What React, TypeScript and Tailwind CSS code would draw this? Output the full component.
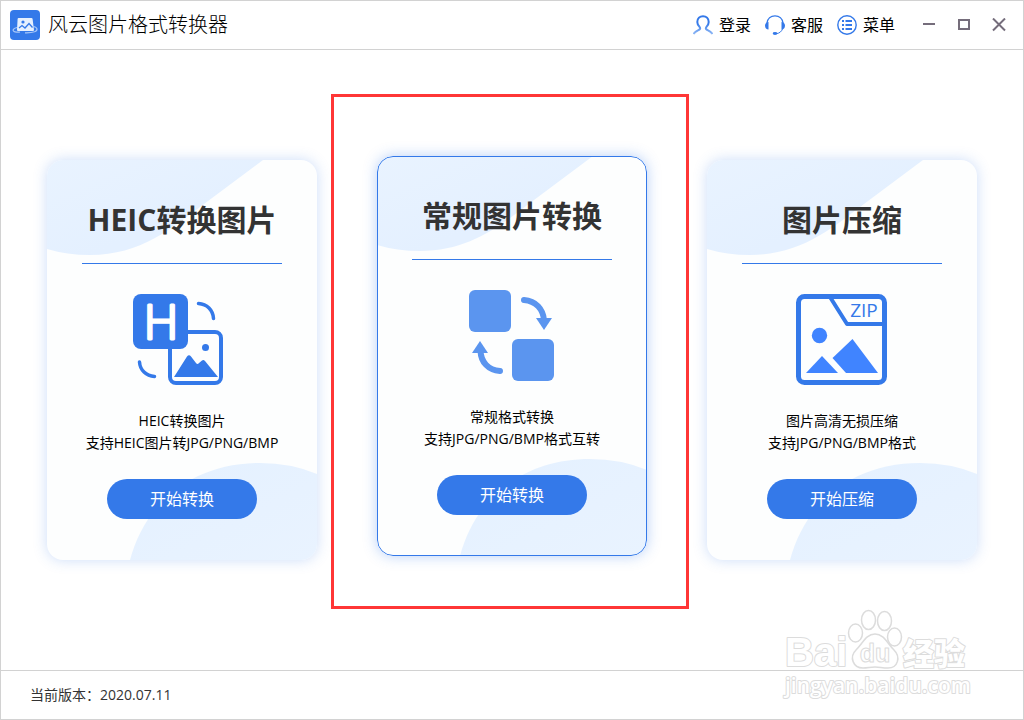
import type { ReactNode } from 'react';

type ToolCard = {
  id: string;
  title: string;
  lines: string[];
  action: string;
  icon: ReactNode;
  active?: boolean;
};

function LogoIcon() {
  return (
    <svg width="30" height="30" viewBox="0 0 30 30" aria-hidden="true">
      <rect width="30" height="30" rx="4" fill="#3479e9" />
      <path d="M7 17.5C2.5 18.5 2 21 5 21.8C7 22.3 9 22.2 10 22" fill="none" stroke="#a9c8f8" strokeWidth="1.2" />
      <path d="M23.5 16.5C28 17.5 28 20.5 24.5 21.8C21.5 22.8 18 22.9 15 22.8" fill="none" stroke="#a9c8f8" strokeWidth="1.2" />
      <path d="M8.5 8H21.5Q22.5 8 22.6 9L24 20Q24 21 23 21H8Q7 21 7 20L7.6 9Q7.7 8 8.5 8Z" fill="#e6f0fe" />
      <circle cx="13" cy="12" r="1.6" fill="#3479e9" />
      <path d="M9 18L12 15.5L15 18L19 13.5L22.5 17.5" fill="none" stroke="#3479e9" strokeWidth="1.3" />
    </svg>
  );
}

function UserIcon() {
  return (
    <svg width="20" height="20" viewBox="0 0 20 20" fill="none" aria-hidden="true">
      <defs>
        <linearGradient id="user-fade" x1="0" y1="0" x2="0" y2="1">
          <stop offset="0.4" stopColor="#3479e9" />
          <stop offset="1" stopColor="#8fb8f5" />
        </linearGradient>
      </defs>
      <path
        d="M0.5 19C2 16.5 4 15.8 6.5 14.5C7.5 14 7.3 13 6.6 12C5 10.5 4.3 9 4.3 7C4.3 3.5 6.8 1.2 10 1.2S15.7 3.5 15.7 7C15.7 9 15 10.5 13.4 12C12.7 13 12.5 14 13.5 14.5C16 15.8 18 16.5 19.5 19"
        stroke="url(#user-fade)"
        strokeWidth="2"
      />
    </svg>
  );
}

function HeadsetIcon() {
  return (
    <svg width="20" height="20" viewBox="0 0 20 20" fill="none" aria-hidden="true">
      <path d="M2 8C2.5 3.5 5.8 0.8 10 0.8S17.5 3.5 18 8" stroke="#3479e9" strokeWidth="1.3" />
      <path d="M3.5 7V14.5C1.5 14.5 0 13 0 10.8S1.5 7 3.5 7Z" fill="#3479e9" />
      <path d="M16.5 7V14.5C18.5 14.5 20 13 20 10.8S18.5 7 16.5 7Z" fill="#3479e9" />
      <path d="M17.5 14C16.5 16.5 14.5 18.2 11.5 18.7" stroke="#3479e9" strokeWidth="1" />
      <ellipse cx="10" cy="18.5" rx="2.3" ry="1.4" fill="#3479e9" />
    </svg>
  );
}

function MenuIcon() {
  return (
    <svg width="20" height="20" viewBox="0 0 20 20" fill="none" aria-hidden="true">
      <circle cx="10" cy="10" r="9.2" stroke="#3479e9" strokeWidth="1.4" />
      <path d="M5 6H7M5 10H7M5 14H7M8.5 6H15M8.5 10H15M8.5 14H15" stroke="#3479e9" strokeWidth="1.8" />
    </svg>
  );
}

function HeicIcon() {
  return (
    <svg className="overflow-visible" width="98" height="92" viewBox="0 0 98 92" aria-hidden="true">
      <rect x="37" y="38" width="51" height="51" rx="6" fill="none" stroke="#3479e9" strokeWidth="4" />
      <rect width="55" height="55" rx="8" fill="#3479e9" />
      <text
        x="28"
        y="45"
        textAnchor="middle"
        fontSize="48"
        fontWeight="300"
        fontFamily="Open Sans"
        fill="#fff"
        stroke="#fff"
        strokeWidth="3"
        strokeLinejoin="round"
      >
        H
      </text>
      <circle cx="72.5" cy="53.5" r="3.5" fill="#3479e9" />
      <path d="M41 83L54 62.5Q56 60 58 62.5L63 69Q64.5 71 66 69L69 66.5Q70.5 65.5 72 67L85 83Z" fill="#3479e9" />
      <path d="M65.5 9.5C74 10 80 16 80.5 24.5" fill="none" stroke="#3479e9" strokeWidth="3.5" strokeLinecap="round" />
      <path d="M6.5 68C7 76 13 82 21.5 82.5" fill="none" stroke="#3479e9" strokeWidth="3.5" strokeLinecap="round" />
    </svg>
  );
}

function ConvertIcon() {
  return (
    <svg width="86" height="92" viewBox="0 0 86 92" aria-hidden="true">
      <rect width="42" height="42" rx="6" fill="#5b95ef" />
      <rect x="43" y="49" width="42" height="42" rx="6" fill="#5b95ef" />
      <path d="M55 10C67 11 74 19 75 30" fill="none" stroke="#5b95ef" strokeWidth="6" strokeLinecap="round" />
      <path d="M67 28H83L75 40Z" fill="#5b95ef" />
      <path d="M31 81C19 80 12 72 11.5 61" fill="none" stroke="#5b95ef" strokeWidth="6" strokeLinecap="round" />
      <path d="M3 63H19L11 51Z" fill="#5b95ef" />
    </svg>
  );
}

function ZipIcon() {
  return (
    <svg width="92" height="92" viewBox="0 0 92 92" aria-hidden="true">
      <rect x="2.5" y="2.5" width="86" height="86" rx="6" fill="none" stroke="#3479e9" strokeWidth="5" />
      <path d="M34 3L51 30H88" fill="none" stroke="#3479e9" strokeWidth="4" strokeLinejoin="round" />
      <text x="68" y="23" textAnchor="middle" fontSize="19" fontFamily="Open Sans" fill="#3479e9">ZIP</text>
      <circle cx="23.5" cy="41.5" r="7.7" fill="#4084ff" />
      <path d="M10 79L26 62L42 79Z" fill="#4084ff" />
      <path d="M36.5 64L56.5 45L82 79H50Z" fill="#4084ff" />
    </svg>
  );
}

function CardBackdrop({ id }: { id: string }) {
  return (
    <svg className="absolute inset-0 w-full h-full" viewBox="0 0 270 400" preserveAspectRatio="none" aria-hidden="true">
      <defs>
        <linearGradient id={`${id}-top`} x1="0" y1="0" x2="1" y2="1">
          <stop offset="0" stopColor="#e9f3ff" />
          <stop offset="0.6" stopColor="#e4f0ff" />
        </linearGradient>
        <linearGradient id={`${id}-bottom`} x1="0" y1="0" x2="1" y2="1">
          <stop offset="0.2" stopColor="#e5f1ff" />
          <stop offset="1" stopColor="#e9f3ff" />
        </linearGradient>
      </defs>
      <path d="M0 0H216L157 44C125 68 94 95 43 95Q20 95 0 89Z" fill={`url(#${id}-top)`} />
      <path d="M83 400C98 343 145 303 213 303Q244 303 270 314V400Z" fill={`url(#${id}-bottom)`} />
    </svg>
  );
}

function Card({ card }: { card: ToolCard }) {
  return (
    <section className={card.active ? 'relative -translate-y-1' : 'relative'}>
      <div
        className={`relative overflow-hidden rounded-2xl bg-[#fdfefe] ${
          card.active
            ? 'shadow-[0_0_14px_rgba(52,121,233,0.35)]'
            : 'shadow-[0_0_14px_rgba(52,121,233,0.25)]'
        }`}
      >
        <CardBackdrop id={card.id} />
        <div className="relative flex flex-col items-center pt-9 pb-[41px]">
          <h2 className="text-[30px] leading-[48px] font-bold text-[#333]">{card.title}</h2>
          <div className="mt-[19px] w-[200px] h-px bg-[#3479e9]" />
          <div className="mt-[30px]">{card.icon}</div>
          <p className="mt-6 text-sm leading-[22px] text-center text-black">
            {card.lines.map((line) => (
              <span key={line} className="block">{line}</span>
            ))}
          </p>
          <button className="mt-[25px] w-[150px] h-10 rounded-full bg-[#3479e9] hover:bg-[#2a6bd6] text-base text-white">
            {card.action}
          </button>
        </div>
        {card.active && <div className="absolute inset-0 rounded-2xl border border-[#3479e9] pointer-events-none" />}
      </div>
      {card.active && (
        <div className="absolute -top-[62px] -bottom-[53px] -left-[46px] -right-[42px] border-3 border-[#ff3636] pointer-events-none" />
      )}
    </section>
  );
}

function Watermark() {
  return (
    <svg
      className="absolute right-[50px] bottom-[18px] pointer-events-none"
      width="194"
      height="94"
      viewBox="0 0 194 94"
      fill="#fff"
      stroke="#dcdcdc"
      strokeWidth="2"
      strokeLinejoin="round"
      aria-hidden="true"
    >
      <g paintOrder="stroke">
        <text x="6" y="59" fontSize="40" fontWeight="700" fontFamily="Liberation Sans">Bai</text>
        <text x="124" y="58" fontSize="31" fontWeight="900" fontFamily="Noto Sans CJK SC">经验</text>
        <text x="6" y="86" fontSize="21" fontWeight="600" fontFamily="Open Sans">jingyan.baidu.com</text>
      </g>
      <g strokeWidth="1.5">
        <ellipse cx="76.5" cy="26" rx="7" ry="9" />
        <ellipse cx="89.5" cy="13" rx="7" ry="9.5" />
        <ellipse cx="105.5" cy="14" rx="7" ry="9.5" />
        <ellipse cx="115.5" cy="30" rx="7" ry="9" />
        <path d="M96 27C105 27 108 36 115 43C122 50 119 61 109 61C103 61 101 60 96 60S89 61 84 61C74 61 70 50 77 43C84 36 87 27 96 27Z" />
      </g>
      <text x="96" y="55" textAnchor="middle" fontSize="25" fontWeight="700" fontFamily="Liberation Sans" strokeWidth="1">du</text>
    </svg>
  );
}

const cards: ToolCard[] = [
  {
    id: 'heic',
    title: 'HEIC转换图片',
    lines: ['HEIC转换图片', '支持HEIC图片转JPG/PNG/BMP'],
    action: '开始转换',
    icon: <HeicIcon />,
  },
  {
    id: 'convert',
    title: '常规图片转换',
    lines: ['常规格式转换', '支持JPG/PNG/BMP格式互转'],
    action: '开始转换',
    icon: <ConvertIcon />,
    active: true,
  },
  {
    id: 'zip',
    title: '图片压缩',
    lines: ['图片高清无损压缩', '支持JPG/PNG/BMP格式'],
    action: '开始压缩',
    icon: <ZipIcon />,
  },
];

const headerActions = [
  { label: '登录', icon: <UserIcon /> },
  { label: '客服', icon: <HeadsetIcon /> },
  { label: '菜单', icon: <MenuIcon /> },
];

export default function App() {
  return (
    <div className="relative min-h-screen flex flex-col bg-white border border-[#d2d2d2] font-['Open_Sans','Noto_Sans_CJK_SC',sans-serif]">
      <header className="h-[49px] flex items-center justify-between pl-[9px] pr-[17px] border-b border-[#d2d2d2]">
        <div className="flex items-center gap-2">
          <LogoIcon />
          <h1 className="text-xl font-light text-black">风云图片格式转换器</h1>
        </div>
        <div className="flex items-center">
          <nav className="flex items-center gap-3.5">
            {headerActions.map((item) => (
              <button key={item.label} className="flex items-center gap-1.5 text-base text-black">
                {item.icon}
                {item.label}
              </button>
            ))}
          </nav>
          <div className="flex items-center gap-[21px] ml-[27px]">
            <button aria-label="最小化">
              <svg width="14" height="14" viewBox="0 0 14 14" stroke="#756d7b" strokeWidth="2">
                <path d="M1 6H13" />
              </svg>
            </button>
            <button aria-label="最大化">
              <svg width="14" height="14" viewBox="0 0 14 14" fill="none" stroke="#756d7b" strokeWidth="2">
                <rect x="2" y="2" width="10" height="9" />
              </svg>
            </button>
            <button aria-label="关闭">
              <svg width="14" height="14" viewBox="0 0 14 14" stroke="#756d7b" strokeWidth="2">
                <path d="M1 0.5L13 12.5M13 0.5L1 12.5" />
              </svg>
            </button>
          </div>
        </div>
      </header>

      <main className="flex-1 flex items-center justify-center px-[46px] py-16">
        <div className="w-full max-w-6xl grid grid-cols-3 gap-[60px]">
          {cards.map((card) => (
            <Card key={card.id} card={card} />
          ))}
        </div>
      </main>

      <footer className="h-[49px] flex items-center px-[29px] border-t border-[#d2d2d2] text-sm text-[#333]">
        当前版本：2020.07.11
      </footer>
      <Watermark />
    </div>
  );
}
